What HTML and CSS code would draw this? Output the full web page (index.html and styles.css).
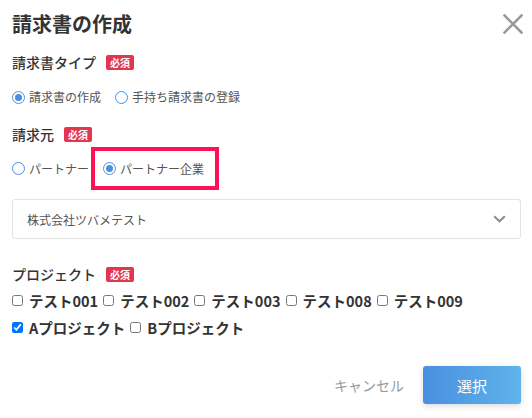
FILE: index.html
```html
<!DOCTYPE html>
<html lang="ja">
<head>
<meta charset="utf-8">
<title>請求書の作成</title>
<link rel="stylesheet" href="styles.css">
</head>
<body>
<div class="dialog">
  <header class="head">
    <h1 class="title">請求書の作成</h1>
    <svg class="close" width="20" height="20" viewBox="0 0 20 20" aria-label="閉じる">
      <path d="M1.5 1.5 L18.5 18.5 M18.5 1.5 L1.5 18.5" stroke="#9a9a9a" stroke-width="2.6" stroke-linecap="square" fill="none"/>
    </svg>
  </header>

  <div class="label label-type">請求書タイプ<span class="badge">必須</span></div>
  <div class="radios row-type">
    <label class="radio"><input type="radio" name="type" checked><span>請求書の作成</span></label>
    <label class="radio"><input type="radio" name="type"><span>手持ち請求書の登録</span></label>
  </div>

  <div class="label label-from">請求元<span class="badge">必須</span></div>
  <div class="radios row-from">
    <label class="radio"><input type="radio" name="from"><span>パートナー</span></label>
    <div class="highlight">
      <label class="radio"><input type="radio" name="from" checked><span>パートナー企業</span></label>
    </div>
  </div>

  <div class="select">
    <span class="select-text">株式会社ツバメテスト</span>
    <svg class="chev" width="13" height="8" viewBox="0 0 13 8">
      <path d="M1.2 1.2 L6.5 6.3 L11.8 1.2" stroke="#8a8a8a" stroke-width="2" fill="none"/>
    </svg>
  </div>

  <div class="label label-proj">プロジェクト<span class="badge">必須</span></div>
  <div class="checks">
    <label class="check"><input type="checkbox"><span>テスト001</span></label>
    <label class="check"><input type="checkbox"><span>テスト002</span></label>
    <label class="check"><input type="checkbox"><span>テスト003</span></label>
    <label class="check"><input type="checkbox"><span>テスト008</span></label>
    <label class="check"><input type="checkbox"><span>テスト009</span></label>
  </div>
  <div class="checks">
    <label class="check"><input type="checkbox" checked><span>Aプロジェクト</span></label>
    <label class="check"><input type="checkbox"><span>Bプロジェクト</span></label>
  </div>

  <footer class="foot">
    <span class="cancel">キャンセル</span>
    <button class="primary" type="button">選択</button>
  </footer>
</div>
</body>
</html>
```

FILE: styles.css
```css
* { box-sizing: border-box; }
html, body { margin: 0; padding: 0; background: #fff; }
body {
  width: 532px;
  height: 418px;
  overflow: hidden;
  font-family: "Noto Sans CJK JP", "Noto Sans", sans-serif;
  color: #333;
}
.dialog {
  padding: 12px 11px 0 12px;
  display: flex;
  flex-direction: column;
}
.head {
  display: flex;
  justify-content: space-between;
  align-items: center;
  height: 24px;
}
.title {
  margin: 0;
  font-size: 20px;
  font-weight: 700;
  line-height: 24px;
  color: #333;
}
.close { margin-right: -2px; }

.label {
  display: flex;
  align-items: center;
  gap: 10px;
  height: 20px;
  font-size: 14px;
  font-weight: 500;
  line-height: 20px;
  color: #333;
}
.label-type { margin-top: 16px; }
.label-from { margin-top: 17px; }
.label-proj { margin-top: 25px; }

.badge {
  display: inline-flex;
  align-items: center;
  height: 15px;
  padding: 0 4px;
  background: #e2364f;
  color: #fff;
  font-size: 10px;
  font-weight: 700;
  line-height: 15px;
  border-radius: 2px;
}

.radios {
  display: flex;
  align-items: center;
}
.row-type { margin-top: 15px; height: 20px; gap: 14px; }
.row-from { margin-top: 3px; height: 43px; gap: 2px; }

.radio {
  display: inline-flex;
  align-items: center;
  gap: 4px;
  font-size: 12px;
  line-height: 20px;
  color: #555;
}
.radio input {
  appearance: none;
  -webkit-appearance: none;
  margin: 0;
  width: 13px;
  height: 13px;
  border: 1.6px solid #4a90e2;
  border-radius: 50%;
  background: #fff;
  position: relative;
}
.radio input:checked::after {
  content: "";
  position: absolute;
  left: 50%;
  top: 50%;
  width: 7px;
  height: 7px;
  margin: -3.5px 0 0 -3.5px;
  border-radius: 50%;
  background: #4a90e2;
}

.highlight {
  height: 43px;
  width: 128px;
  border: 4px solid #ff1158;
  display: flex;
  align-items: center;
  padding-left: 8px;
}

.select {
  margin-top: 9px;
  height: 40px;
  border: 1px solid #e3e3e3;
  border-radius: 3px;
  display: flex;
  align-items: center;
  justify-content: space-between;
  padding: 0 14px 0 14px;
}
.select-text {
  font-size: 12px;
  color: #555;
}

.checks {
  display: flex;
  align-items: center;
  height: 27px;
  gap: 5px;
}
.label-proj + .checks { margin-top: 3px; }
.check {
  display: inline-flex;
  align-items: center;
  gap: 6px;
  font-size: 14.5px;
  font-weight: 700;
  color: #333;
}
.check input {
  margin: 0;
  width: 11px;
  height: 11px;
}

.foot {
  margin-top: 25px;
  display: flex;
  justify-content: flex-end;
  align-items: center;
  gap: 19px;
}
.cancel {
  font-size: 14px;
  color: #999;
}
.primary {
  width: 98px;
  height: 38px;
  border: 0;
  border-radius: 3px;
  background: linear-gradient(90deg, #4a8fe0, #5eb4ea);
  color: #fff;
  font-family: inherit;
  font-size: 15px;
  box-shadow: 0 2px 6px rgba(0, 0, 0, 0.15);
}
```
